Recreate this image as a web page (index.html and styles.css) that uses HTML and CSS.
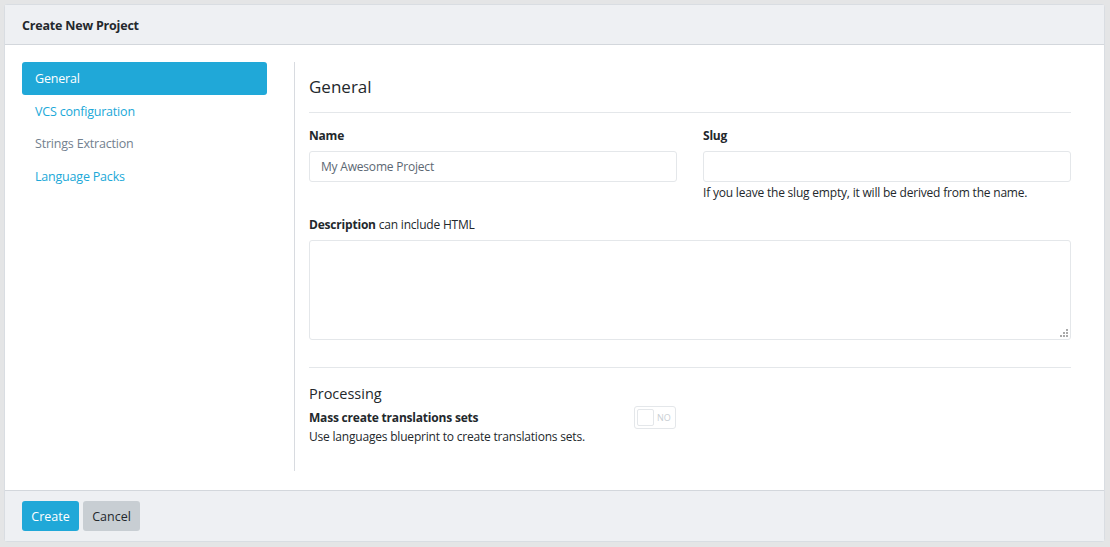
FILE: index.html
```html
<!DOCTYPE html>
<html>
<head>
<meta charset="utf-8">
<link rel="stylesheet" href="styles.css">
</head>
<body>
<div class="card">
  <div class="card-header">Create New Project</div>
  <div class="card-body">
    <nav class="side">
      <a class="nav-item active">General</a>
      <a class="nav-item link">VCS configuration</a>
      <a class="nav-item muted">Strings Extraction</a>
      <a class="nav-item link">Language Packs</a>
    </nav>
    <div class="content">
      <h2 class="section-title">General</h2>
      <div class="row">
        <div class="field">
          <label class="label">Name</label>
          <div class="input placeholder">My Awesome Project</div>
        </div>
        <div class="field">
          <label class="label">Slug</label>
          <div class="input"></div>
          <div class="help">If you leave the slug empty, it will be derived from the name.</div>
        </div>
      </div>
      <div class="field desc">
        <label class="label">Description <span class="normal">can include HTML</span></label>
        <div class="textarea">
          <svg class="grip" width="8" height="8" viewBox="0 0 8 8"><rect x="6" y="0" width="2" height="2" fill="#aaa"/><rect x="3" y="3" width="2" height="2" fill="#aaa"/><rect x="6" y="3" width="2" height="2" fill="#aaa"/><rect x="0" y="6" width="2" height="2" fill="#aaa"/><rect x="3" y="6" width="2" height="2" fill="#aaa"/><rect x="6" y="6" width="2" height="2" fill="#aaa"/></svg>
        </div>
      </div>
      <h3 class="sub-title">Processing</h3>
      <div class="proc">
        <div class="proc-text">
          <div class="proc-label">Mass create translations sets</div>
          <div class="proc-help">Use languages blueprint to create translations sets.</div>
        </div>
        <div class="switch"><span class="knob"></span><span class="sw-text">NO</span></div>
      </div>
    </div>
  </div>
  <div class="card-footer">
    <button class="btn btn-primary">Create</button>
    <button class="btn btn-secondary">Cancel</button>
  </div>
</div>
</body>
</html>
```
FILE: styles.css
```css
html, body {
  margin: 0;
  padding: 0;
}
body {
  background: #e4e5e6;
  font-family: "Open Sans", "Segoe UI", sans-serif;
  font-size: 12px;
  letter-spacing: -0.2px;
  color: #23282c;
  padding: 4px 5px 5px 4px;
  height: 547px;
  box-sizing: border-box;
}
.card {
  background: #fff;
  border: 1px solid #d9dde2;
  border-radius: 3px;
  height: 538px;
  box-sizing: border-box;
  display: flex;
  flex-direction: column;
}
.card-header {
  background: #eef0f3;
  border-bottom: 1px solid #d3d7dc;
  height: 40px;
  box-sizing: border-box;
  padding: 1px 17px 0;
  display: flex;
  align-items: center;
  font-weight: 700;
  font-size: 12.5px;
}
.card-body {
  flex: 1;
  display: flex;
  padding: 17px 33px 19px 17px;
}
.side {
  width: 245px;
  display: flex;
  flex-direction: column;
  padding-right: 27px;
  border-right: 1px solid #d8dbe0;
}
.nav-item {
  display: block;
  height: 33px;
  line-height: 33px;
  padding: 0 13px;
  border-radius: 3px;
  margin-bottom: -0.5px;
  cursor: pointer;
  font-size: 12.5px;
}
.nav-item.active {
  background: #20a8d8;
  color: #fff;
}
.nav-item.link { color: #20a8d8; }
.nav-item.muted { color: #73818f; }
.content {
  flex: 1;
  padding-left: 14px;
}
.section-title {
  margin: 0;
  font-weight: 400;
  font-size: 17px;
  letter-spacing: 0;
  line-height: 24px;
  padding: 13px 0 13px;
  border-bottom: 1px solid #e4e7ea;
}
.row {
  display: flex;
  gap: 26px;
  margin-top: 13px;
}
.row .field { flex: 1; }
.label {
  display: block;
  font-weight: 700;
  line-height: 20px;
  margin-bottom: 5px;
}
.label .normal { font-weight: 400; }
.input {
  height: 31px;
  box-sizing: border-box;
  border: 1px solid #e4e7ea;
  border-radius: 3px;
  padding: 0 11px;
  line-height: 29px;
}
.placeholder { color: #5c6873; }
.help {
  margin-top: 1px;
  line-height: 19px;
}
.desc { margin-top: 13px; }
.textarea {
  height: 100px;
  box-sizing: border-box;
  border: 1px solid #e4e7ea;
  border-radius: 3px;
  position: relative;
}
.grip {
  position: absolute;
  right: 2px;
  bottom: 2px;
}
.sub-title {
  margin: 27px 0 3px;
  border-top: 1px solid #e4e7ea;
  padding-top: 15px;
  font-weight: 400;
  font-size: 14.5px;
  letter-spacing: 0;
  line-height: 22px;
}
.proc {
  display: flex;
  align-items: flex-start;
}
.proc-text { width: 325px; }
.proc-label {
  font-weight: 700;
  line-height: 19px;
}
.proc-help { line-height: 19px; }
.switch {
  margin-top: -2px;
  width: 42px;
  height: 23px;
  box-sizing: border-box;
  border: 1px solid #e4e7ea;
  border-radius: 3px;
  display: flex;
  align-items: center;
  padding: 2px;
  gap: 3px;
}
.knob {
  width: 15px;
  height: 15px;
  border: 1px solid #e4e7ea;
  border-radius: 2px;
}
.sw-text {
  font-size: 9px;
  font-weight: 400;
  letter-spacing: 0;
  color: #c8ced3;
}
.card-footer {
  background: #eef0f3;
  border-top: 1px solid #d3d7dc;
  height: 51px;
  box-sizing: border-box;
  padding: 10px 17px;
  display: flex;
  gap: 4px;
}
.btn {
  font-family: inherit;
  font-size: 12.5px;
  height: 30px;
  width: 57px;
  border: none;
  border-radius: 3px;
  padding: 0;
}
.btn-primary { background: #20a8d8; color: #fff; }
.btn-secondary { background: #c8ced3; color: #23282c; }
```
